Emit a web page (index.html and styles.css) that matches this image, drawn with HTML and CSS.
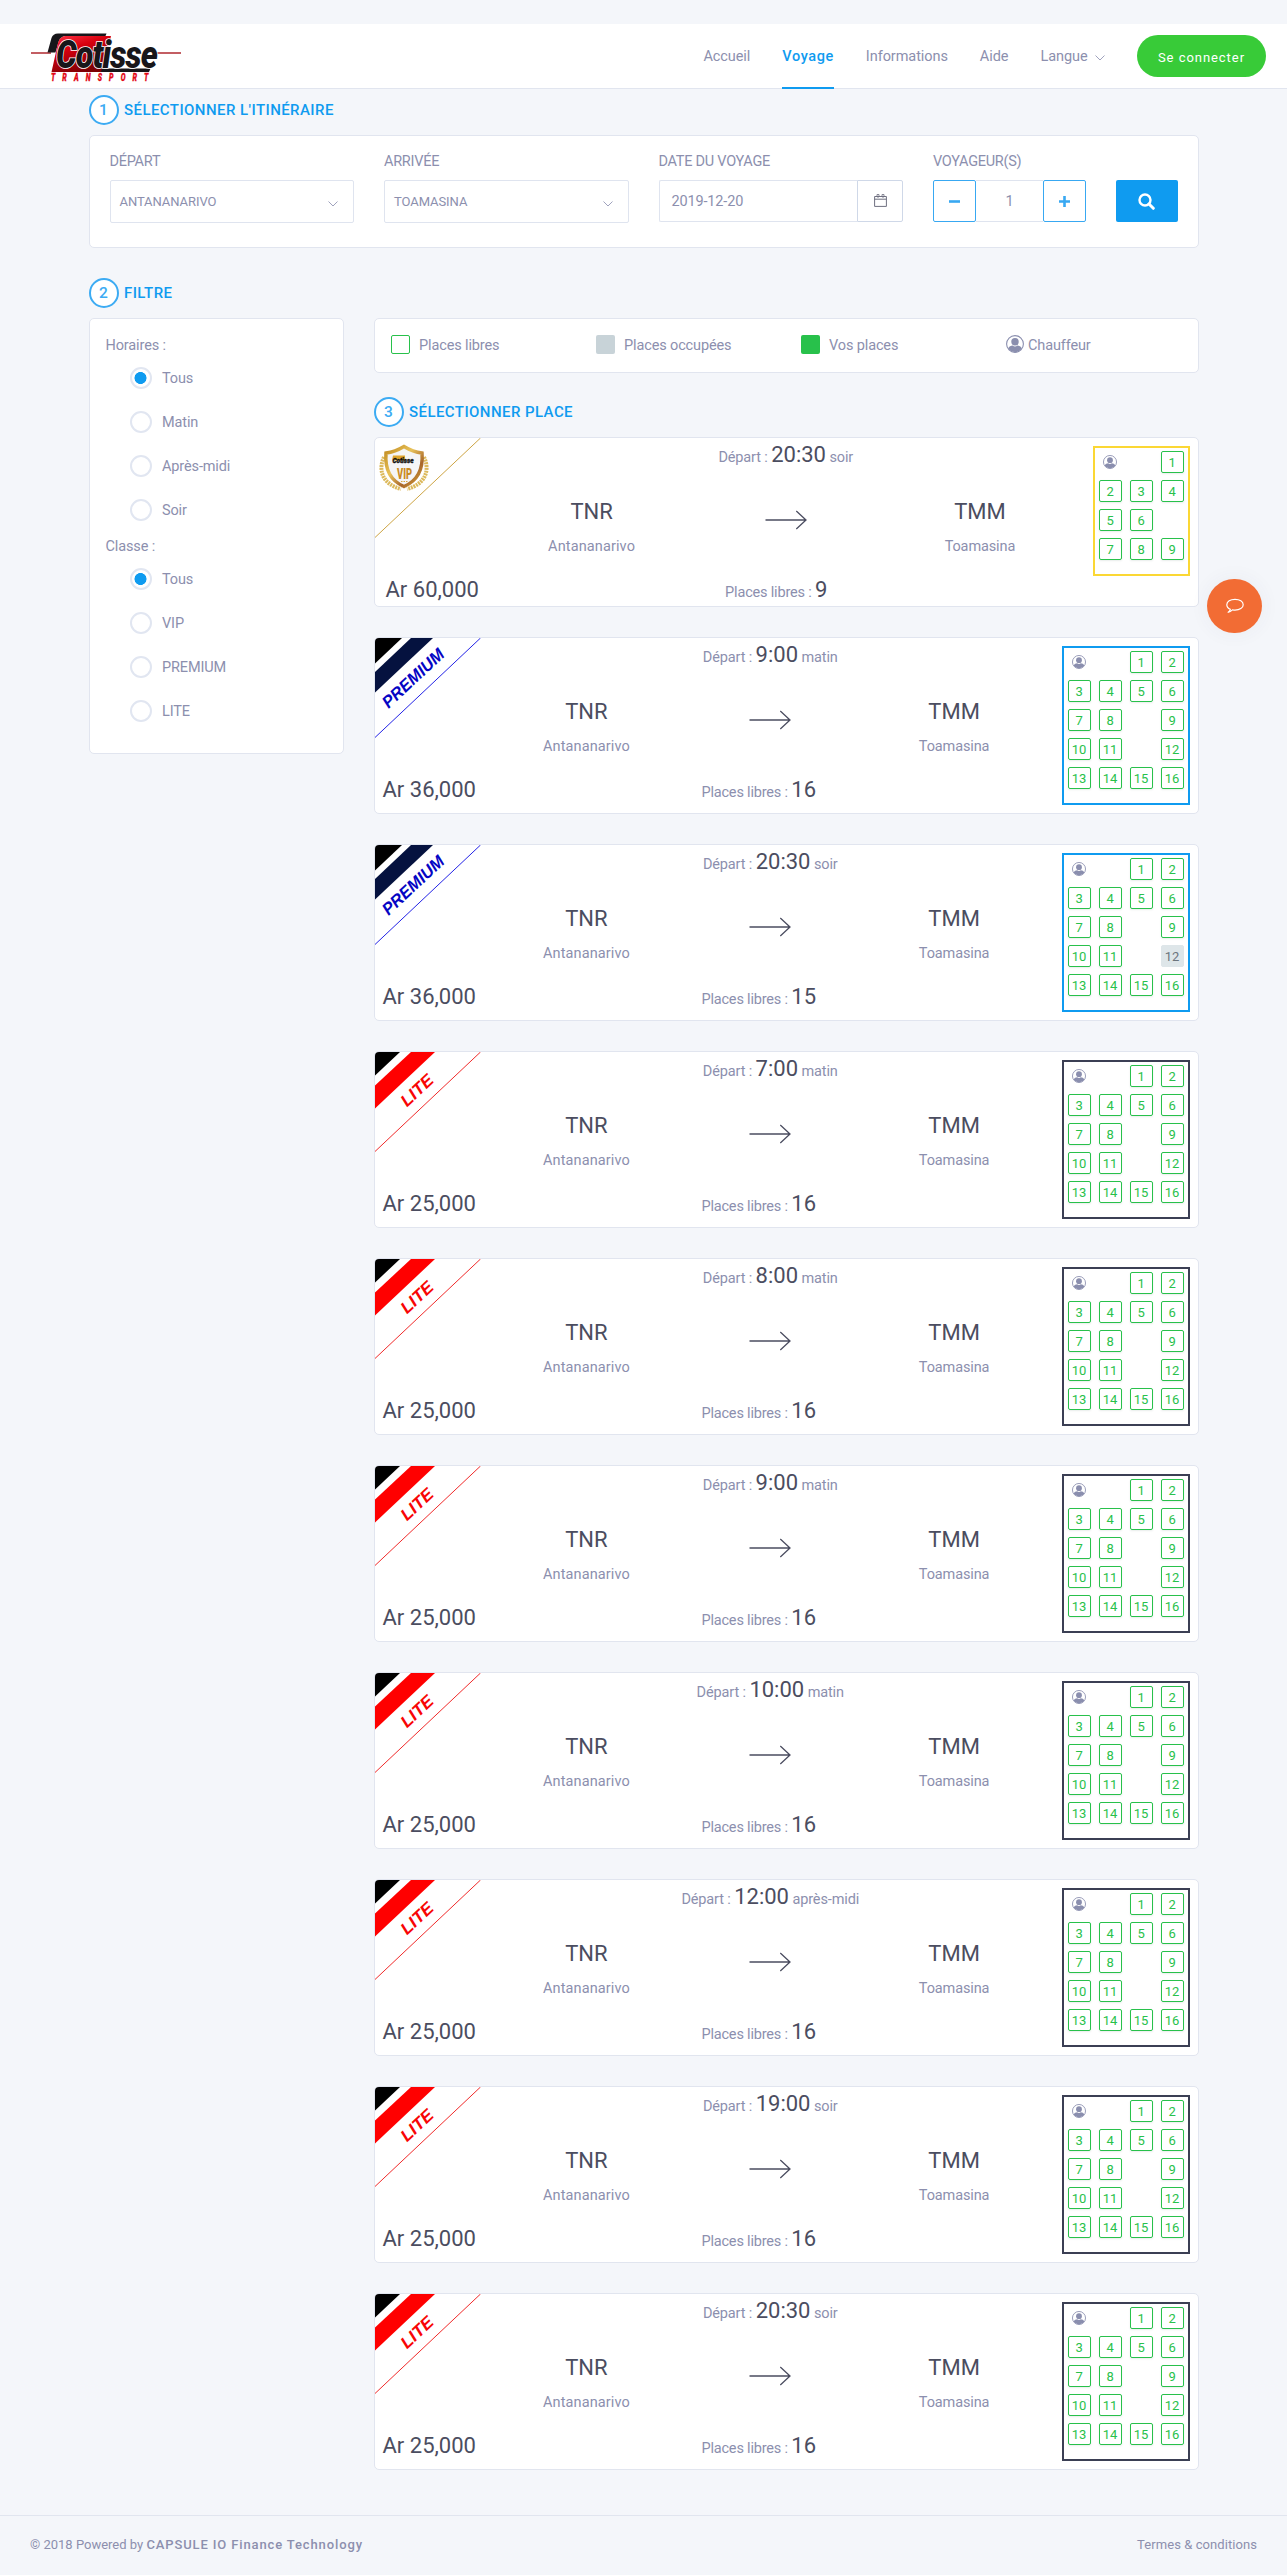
FILE: index.html
```html
<!DOCTYPE html>
<html lang="fr">
<head>
<meta charset="utf-8">
<title>Cotisse Transport – Voyage</title>
<link rel="stylesheet" href="styles.css">
</head>
<body>
<svg class="sprite" aria-hidden="true">
  <symbol id="i-driver" viewBox="0 0 18 18">
    <circle cx="9" cy="9" r="8.4" fill="none" stroke="currentColor" stroke-width="1.1"/>
    <circle cx="9" cy="6.7" r="3.7" fill="currentColor"/>
    <path d="M2.2 13.4C3 11.2 5 10.8 6.600 10.600Q9 12.400 11.400 10.600C13 10.800 15 11.200 15.800 13.400A8.300 8.300 0 0 1 2.200 13.400Z" fill="currentColor"/>
  </symbol>
  <symbol id="i-chevron" viewBox="0 0 10 6"><path d="M.5.5 5 5 9.500.5" fill="none" stroke="currentColor"/></symbol>
  <symbol id="i-arrow" viewBox="0 0 42 20"><path d="M.5 10H41M31.300 1 41 10 31.300 19" fill="none" stroke="currentColor" stroke-width="1.300"/></symbol>
</svg>

<header class="topbar">
  <svg class="logo" viewBox="0 0 150 50" role="img" aria-label="Cotisse Transport">
    <defs><linearGradient id="red" x1="0" y1="0" x2=".5" y2="1"><stop offset="0" stop-color="#ff3548"/><stop offset=".4" stop-color="#d8000e"/><stop offset="1" stop-color="#7d0004"/></linearGradient></defs>
    <path d="M0 20H20M122 20H150" stroke="#b02a30" stroke-width="1.600"/>
    <path d="M16.500 19.500 20.500 5Q22 .5 27 .5H75.500L74.500 3H34Q29 4 27.500 9L24.500 19.500Z" fill="#17161a"/>
    <path d="M20.500 39 27 10Q28.500 4 34 3H80L72 39Z" fill="url(#red)"/>
    <path d="M71 35.500H119.500L118 39H70Z" fill="#17161a"/>
    <text x="25" y="35" textLength="101" lengthAdjust="spacingAndGlyphs" class="logo-name">Cotisse</text>
    <text x="28" y="48" textLength="137" transform="scale(.71 1)" class="logo-sub">TRANSPORT</text>
  </svg>
  <nav class="nav">
    <a>Accueil</a><a class="active">Voyage</a><a>Informations</a><a>Aide</a>
    <a>Langue <svg class="chev" viewBox="0 0 10 6"><use href="#i-chevron"/></svg></a>
  </nav>
  <button class="login">Se connecter</button>
</header>

<main class="container">
  <h2 class="step"><span class="num">1</span>SÉLECTIONNER L'ITINÉRAIRE</h2>
  <form class="card search">
    <div class="field span3"><label>DÉPART</label><div class="select">ANTANANARIVO<svg class="chev" viewBox="0 0 10 6"><use href="#i-chevron"/></svg></div></div>
    <div class="field span3"><label>ARRIVÉE</label><div class="select">TOAMASINA<svg class="chev" viewBox="0 0 10 6"><use href="#i-chevron"/></svg></div></div>
    <div class="field span3"><label>DATE DU VOYAGE</label>
      <div class="date"><span class="date-value">2019-12-20</span><span class="date-btn"><svg width="13" height="14" viewBox="0 0 13 14" fill="none" stroke="#6f7080"><path d="M.6 2.500H12.400V12.400H.6ZM.6 5.200H12.400"/><path d="M3 .5H5V3H3ZM8 .5H10V3H8Z" stroke-width=".8"/></svg></span></div></div>
    <div class="field span2"><label>VOYAGEUR(S)</label>
      <div class="stepper"><span class="pm"><svg width="11" height="11" viewBox="0 0 11 11"><path d="M0 5.500H11" stroke="#38a8f2" stroke-width="2.600"/></svg></span><span class="count">1</span><span class="pm"><svg width="11" height="11" viewBox="0 0 11 11"><path d="M0 5.500H11M5.500 0V11" stroke="#38a8f2" stroke-width="2.600"/></svg></span></div></div>
    <button class="go" type="button" aria-label="Rechercher"><svg width="17" height="17" viewBox="0 0 17 17" fill="none" stroke="#fff"><circle cx="7" cy="7" r="5.500" stroke-width="2.400"/><path d="M11 11 15.300 15.300" stroke-width="3" stroke-linecap="round"/></svg></button>
  </form>

  <div class="columns">
    <aside>
      <h2 class="step"><span class="num">2</span>FILTRE</h2>
      <div class="card filters">
        <p>Horaires :</p>
        <ul><li class="on">Tous</li><li>Matin</li><li>Après-midi</li><li>Soir</li></ul>
        <p>Classe :</p>
        <ul><li class="on">Tous</li><li>VIP</li><li>PREMIUM</li><li>LITE</li></ul>
      </div>
    </aside>
    <section>
      <div class="card legend">
        <span><i class="box free"></i>Places libres</span>
        <span><i class="box busy"></i>Places occupées</span>
        <span><i class="box mine"></i>Vos places</span>
        <span><svg class="legend-driver" viewBox="0 0 18 18"><use href="#i-driver"/></svg>Chauffeur</span>
      </div>
      <h2 class="step step3"><span class="num">3</span>SÉLECTIONNER PLACE</h2>
      <div id="trips" class="trips"></div>
    </section>
  </div>
</main>

<footer class="footer"><span>© 2018 Powered by <b>CAPSULE IO Finance Technology</b></span><span class="terms">Termes &amp; conditions</span></footer>

<button class="chat" aria-label="Chat"><svg width="18" height="16" viewBox="0 0 18 16" fill="none" stroke="#fff" stroke-width="1.200"><path d="M4.300 11.300C1.800 10.200.8 8.500.8 6.700.8 3.500 4.300 1.300 9 1.300S17.200 3.500 17.200 6.700 13.700 12.100 9 12.100C8 12.100 7.300 12 6.500 11.900 5.300 13.200 3.800 14.200 1.800 14.400 3.300 13.500 4 12.700 4.300 11.300Z"/></svg></button>
<script src="trips.js"></script>
</body>
</html>
```
FILE: styles.css
```css
*, *::before { box-sizing: border-box; }
body { margin: 0; padding-top: 24px; background: #f4f6fa; color: #8c8fae; font: 14.5px/21px Roboto, "Liberation Sans", sans-serif; letter-spacing: -.13px; }
h2, p, ul { margin: 0; padding: 0; font-weight: 400; list-style: none; }
button { border: 0; padding: 0; font: inherit; }
svg { display: block; }
.sprite { position: absolute; width: 0; height: 0; }
.ribbon-text { font: italic bold 17px "Liberation Sans", sans-serif; letter-spacing: 0; }
.badge-name { font: italic 900 8px Roboto, sans-serif; fill: #111; stroke: #111; stroke-width: .4px; letter-spacing: 0; }
.badge-vip { font: 900 14px Roboto, sans-serif; letter-spacing: 0; }

.topbar { height: 65px; display: flex; align-items: center; background: #fff; border-bottom: 1px solid #e1e5ef; padding: 0 21px 0 31px; }
.logo { width: 150px; height: 50px; margin-top: 4px; }
.logo-name { font: italic 900 38px Roboto, sans-serif; fill: #17161a; stroke: #fff; stroke-width: 1.6px; paint-order: stroke; letter-spacing: -1px; }
.logo-sub { font: italic 900 10px Roboto, sans-serif; fill: #e30613; stroke: #e30613; stroke-width: .3px; }
.nav { margin-left: auto; display: flex; gap: 32px; height: 65px; }
.nav a { display: flex; align-items: center; height: 65px; padding-top: 1px; letter-spacing: -.07px; }
.nav .active { color: #0f9bf0; font-weight: 500; letter-spacing: .6px; border-bottom: 2px solid #0f9bf0; padding-top: 3px; }
.chev { width: 10px; height: 6px; color: #9fa2bd; }
.nav .chev { margin: 2px 0 0 7.5px; }
.login { width: 129px; height: 42px; margin-left: 32px; padding-top: 2px; border-radius: 21px; background: #38cb38; color: #fff; font-size: 13px; letter-spacing: .95px; }

.container { width: 1110px; margin: 0 auto; padding-top: 6px; }
.step { display: flex; align-items: center; height: 30px; margin-bottom: 10px; color: #0f9bf0; font-size: 15px; font-weight: 500; letter-spacing: .43px; }
.num { width: 30px; height: 30px; margin-right: 5.5px; border: 2px solid #3cabf3; border-radius: 50%; background: #fff; color: #3cabf3; text-align: center; line-height: 26px; font-size: 15.5px; letter-spacing: 0; }
.card { background: #fff; border: 1px solid #e1e5ef; border-radius: 5px; }
.search { height: 113px; padding: 16px 20px; display: grid; grid-template-columns: repeat(12, 1fr); column-gap: 30px; align-items: start; }
.span3 { grid-column: span 3; }
.span2 { grid-column: span 2; }
.field label { display: block; height: 28px; line-height: 20px; letter-spacing: -.27px; }
.select { height: 43px; border: 1px solid #dfe4ef; border-radius: 2px; padding: 0 15px 0 9px; display: flex; align-items: center; justify-content: space-between; font-size: 13px; letter-spacing: -.07px; }
.select .chev { margin-top: 4px; }
.date, .stepper { display: flex; height: 42px; }
.date-value { flex: 1; border: 1px solid #dfe4ef; border-right: 0; border-radius: 2px 0 0 2px; padding-left: 12px; line-height: 41px; letter-spacing: -.15px; }
.date-btn { width: 46px; border: 1px solid #cfd8e8; border-radius: 0 2px 2px 0; display: grid; place-items: center; }
.pm { width: 43px; border: 1px solid #38a8f2; border-radius: 2px; display: grid; place-items: center; }
.count { flex: 1; border: solid #dfe4ef; border-width: 1px 0; text-align: center; line-height: 41px; }
.go { height: 42px; margin-top: 28px; background: #0f9bf0; border-radius: 2px; display: grid; place-items: center; }

.columns { display: grid; grid-template-columns: 255px 825px; gap: 30px; margin-top: 30px; }
.filters { height: 436px; padding: 16px; }
.filters p { height: 21px; line-height: 21px; }
.filters ul { padding: 10px 0 0 24px; height: 180px; }
.filters li { display: flex; align-items: center; gap: 10.5px; height: 24px; margin-bottom: 20px; }
.filters li::before { content: ""; width: 22px; height: 22px; border: 2px solid #e1e6f1; border-radius: 50%; }
.filters .on::before { background: radial-gradient(circle at 8.5px 9px, #0f9bf0 5.7px, #fff 6.3px); }
section { padding-top: 40px; }
.legend { height: 55px; padding: 0 0 0 16px; display: grid; grid-template-columns: repeat(4, 205px); width: 825px; overflow: hidden; }
.legend span { display: flex; align-items: center; height: 52px; }
.box { width: 19px; height: 19px; margin: -1px 9.5px 0 0; border-radius: 2px; }
.free { border: 1px solid #28c14b; }
.busy { background: #c8d3d8; }
.mine { background: #28c14b; }
.legend-driver { width: 18px; height: 18px; margin: -3px 4.5px 0 0; color: #8a8eae; }
.step3 { margin-top: 24px; }

.trips { display: flex; flex-direction: column; gap: 30px; }
.trip { position: relative; display: flex; align-items: flex-start; padding-right: 7.5px; height: 177px; overflow: hidden; }
.trip-vip { height: 170px; }
.ribbon { position: absolute; left: 0; top: 0; width: 106px; height: 101px; }
.dark { color: #4b4d60; font-size: 22px; letter-spacing: 0; }
.price { width: 120px; padding: 135px 0 0 8px; line-height: 33px; }
.trip-vip .price { padding-left: 11px; }
.info { flex: 1; margin-right: 16px; text-align: center; }
.when, .left { line-height: 33px; height: 33px; white-space: nowrap; }
.left { padding-right: 23px; letter-spacing: -.18px; }
.trip-vip .left { padding-right: 19px; }
.route { display: grid; grid-template-columns: repeat(3, 1fr); height: 102px; padding-top: 22px; }
.route b { display: block; font-weight: 400; line-height: 37px; height: 37px; }
.route small { display: block; font-size: 14.5px; line-height: 34px; letter-spacing: .12px; }
.route small.to { letter-spacing: -.12px; }
.route svg { width: 42px; height: 20px; margin: 17px auto 0; color: #4b4d60; }
.seats { margin-top: 8px; padding: 3px 4px 14px; border: 2px solid #3b3f54; display: grid; grid-template-columns: repeat(4, 23px); grid-auto-rows: 22px; gap: 7px 8px; font-size: 13px; line-height: 22px; letter-spacing: -.1px; }
.seats-vip { border-color: #fbd734; grid-template-columns: repeat(3, 23px); }
.seats-premium { border-color: #0f9bf0; }
.seat { border: 1px solid #28c14b; border-radius: 2px; color: #28c14b; text-align: center; padding-right: 1px; box-shadow: 0 1px 2px rgba(40, 80, 60, .1); }
.seat.taken { background: #dee6e9; border-color: #dee6e9; color: #6c757d; box-shadow: none; }
.seats svg { width: 14px; height: 14px; margin: 4px; color: #8a8eae; }

.footer { display: flex; justify-content: space-between; height: 60px; margin-top: 45px; padding: 0 30px; border-top: 1px solid #e1e5ef; font-size: 13px; line-height: 57px; letter-spacing: 0; }
.footer b { font-weight: 500; letter-spacing: .87px; }
.terms { letter-spacing: .07px; }
.chat { position: fixed; right: 25px; top: 579px; width: 55px; height: 54px; border-radius: 27px; background: #f26c34; display: grid; place-items: center; box-shadow: 0 0 20px rgba(60, 70, 110, .06); }
```
FILE: trips.js
```
const ribbons = {
  premium: `<path d="M0 0H27L0 25.500Z"/>
    <path d="M36 0H58L0 54.500V34Z" fill="#05123f"/>
    <path d="M105.500 0 0 99.500" stroke="#2323e6"/>
    <text transform="translate(13.500 71) rotate(-43)" textLength="78" lengthAdjust="spacingAndGlyphs" class="ribbon-text" fill="#0505c4">PREMIUM</text>`,
  lite: `<path d="M0 0H25L0 23.500Z"/>
    <path d="M36 0H60L0 56.500V33.500Z" fill="#f00"/>
    <path d="M105.500 0 0 99.500" stroke="#f02a2a"/>
    <text transform="translate(32 55.500) rotate(-43)" textLength="38" lengthAdjust="spacingAndGlyphs" class="ribbon-text" fill="#f80505">LITE</text>`,
  vip: `<linearGradient id="gold" x1="0" y1="0" x2="1" y2="1"><stop offset="0" stop-color="#c08a1e"/><stop offset=".4" stop-color="#e8c25a"/><stop offset=".7" stop-color="#a9672a"/><stop offset="1" stop-color="#d9a93c"/></linearGradient>
    <path d="M105.500 0 0 99.500" stroke="#cda443"/>
    <path d="M9 19C3 32 7 46 26 51M49 19C55 32 51 46 32 51" fill="none" stroke="#dcb95c" stroke-width="4" stroke-dasharray="2 .8"/>
    <path d="M29 8.500Q38 14 47 15Q49 40 29 48.500Q9 40 11 15Q20 14 29 8.500Z" fill="#f5f5f6" stroke="url(#gold)" stroke-width="3.500"/>
    <path d="M18 17.500h12v5H17Z" fill="#e0a52c"/>
    <text x="17.500" y="24.500" textLength="21" lengthAdjust="spacingAndGlyphs" class="badge-name">Cotisse</text>
    <text x="22" y="40.500" textLength="15" lengthAdjust="spacingAndGlyphs" class="badge-vip" fill="#c98a22">VIP</text>
    <path d="M26 43.500h7" stroke="#d9a93c" stroke-dasharray="1.500 1"/>`
};
const layouts = {
  vip: ['D', '', 1, 2, 3, 4, 5, 6, '', 7, 8, 9],
  bus: ['D', '', 1, 2, 3, 4, 5, 6, 7, 8, '', 9, 10, 11, '', 12, 13, 14, 15, 16]
};
const trips = [
  ['vip', '20:30', 'soir', '60,000', 9],
  ['premium', '9:00', 'matin', '36,000', 16],
  ['premium', '20:30', 'soir', '36,000', 15, [12]],
  ['lite', '7:00', 'matin', '25,000', 16],
  ['lite', '8:00', 'matin', '25,000', 16],
  ['lite', '9:00', 'matin', '25,000', 16],
  ['lite', '10:00', 'matin', '25,000', 16],
  ['lite', '12:00', 'après-midi', '25,000', 16],
  ['lite', '19:00', 'soir', '25,000', 16],
  ['lite', '20:30', 'soir', '25,000', 16]
];
const seat = (s, taken) => s === 'D'
  ? '<svg viewBox="0 0 18 18"><use href="#i-driver"/></svg>'
  : s === '' ? '<span></span>'
  : `<span class="seat${taken.includes(s) ? ' taken' : ''}">${s}</span>`;

document.getElementById('trips').innerHTML = trips.map(([cls, time, part, price, free, taken = []]) => `
  <article class="card trip trip-${cls}">
    <svg class="ribbon" viewBox="0 0 106 101">${ribbons[cls]}</svg>
    <div class="price dark">Ar ${price}</div>
    <div class="info">
      <div class="when">Départ : <span class="dark">${time}</span> ${part}</div>
      <div class="route">
        <div><b class="dark">TNR</b><small>Antananarivo</small></div>
        <svg viewBox="0 0 42 20"><use href="#i-arrow"/></svg>
        <div><b class="dark">TMM</b><small class="to">Toamasina</small></div>
      </div>
      <div class="left">Places libres : <span class="dark">${free}</span></div>
    </div>
    <div class="seats seats-${cls}">${(layouts[cls] || layouts.bus).map(s => seat(s, taken)).join('')}</div>
  </article>`).join('');
```
